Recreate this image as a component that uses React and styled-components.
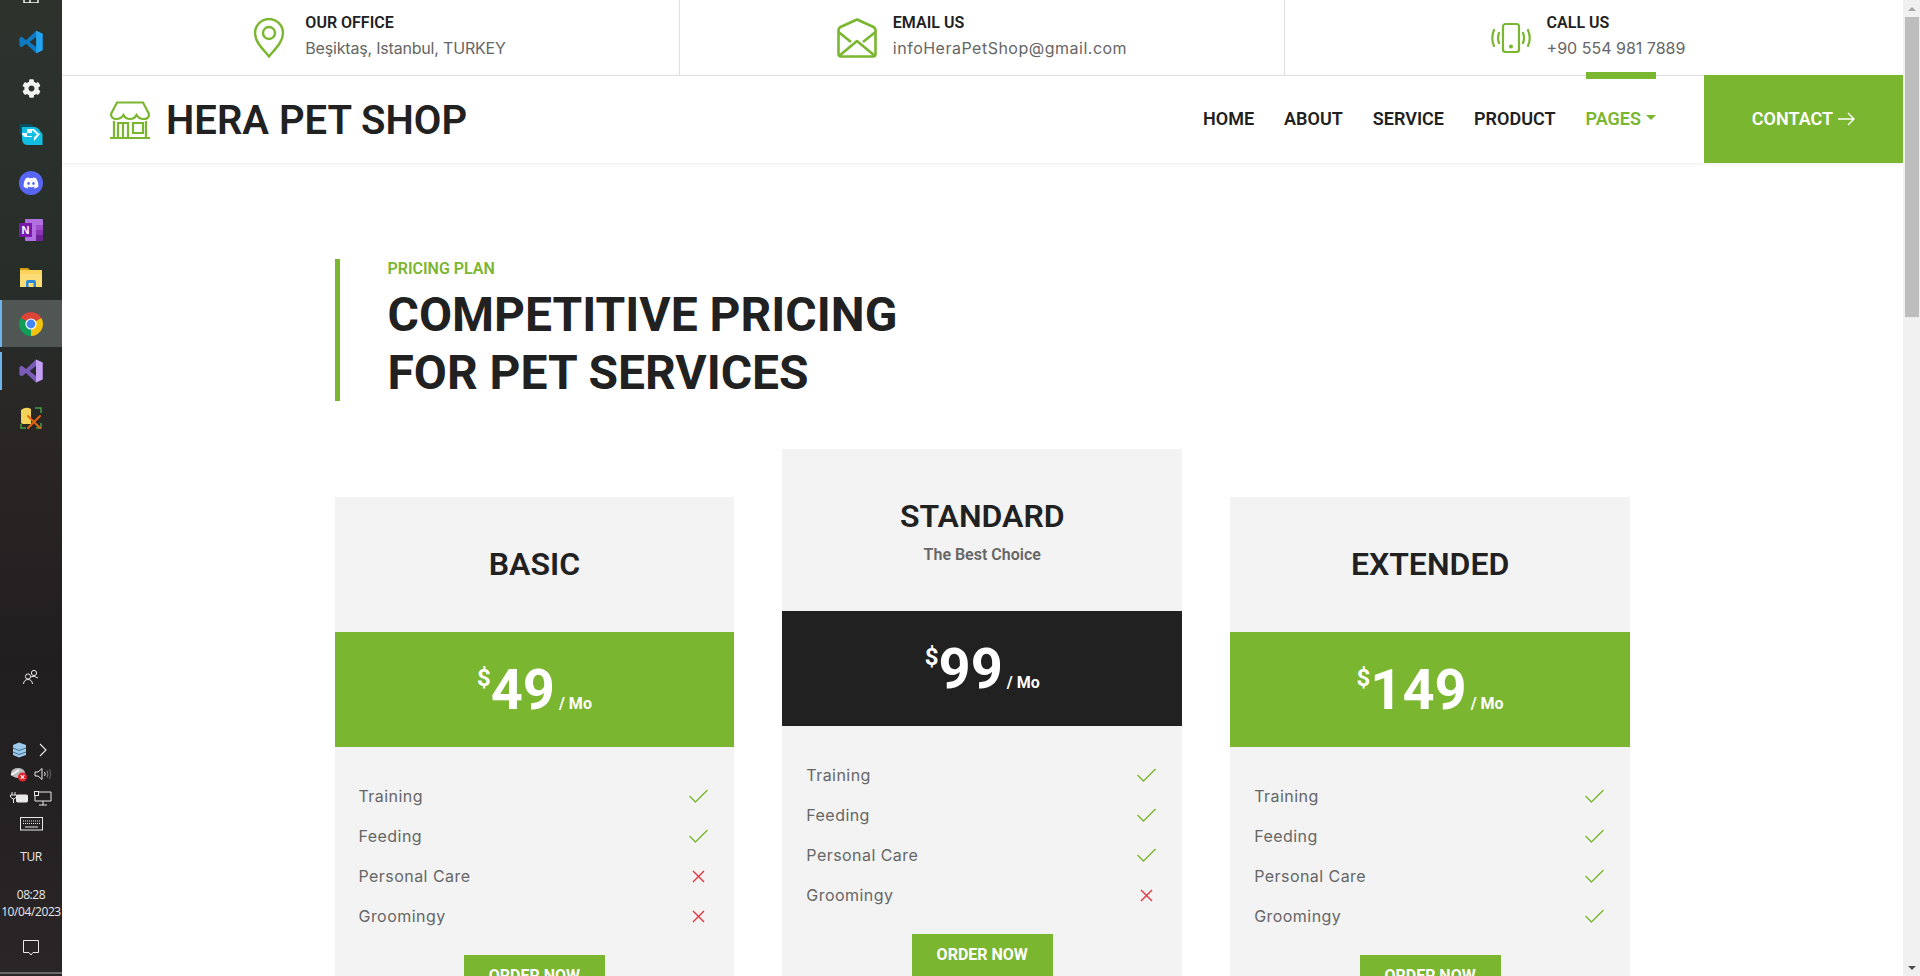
import React from "react";
import styled, { createGlobalStyle } from "styled-components";
import { FaDiscord, FaCog } from "react-icons/fa";

const GREEN = "#7ab62f";
const DARK = "#212121";
const GREY = "#666666";
const BODY_FONT = `"Inter", "Open Sans", sans-serif`;
const HEAD_FONT = `"Roboto", "Liberation Sans", sans-serif`;

const Global = createGlobalStyle`
  html, body { margin: 0; padding: 0; height: 976px; overflow: hidden; background: #fff; }
  * { box-sizing: border-box; }
`;

const Screen = styled.div`
  display: flex;
  width: 1920px;
  height: 976px;
  overflow: hidden;
  font-family: ${BODY_FONT};
`;

/* ---------- Windows taskbar ---------- */
const Taskbar = styled.aside`
  width: 62px;
  flex: none;
  height: 976px;
  display: flex;
  flex-direction: column;
  align-items: stretch;
  background: linear-gradient(180deg, #2d322d 0%, #272e2a 28%, #2a2324 50%, #201e1f 68%, #2a2526 100%);
  color: #fff;
`;
const TopFragment = styled.div`
  height: 18px;
  display: flex;
  justify-content: center;
  align-items: flex-start;
`;
const TaskSlot = styled.div`
  height: 47px;
  display: flex;
  align-items: center;
  justify-content: center;
  position: relative;
  background: ${(p) => (p.$active ? "#505653" : "transparent")};
`;
const RunBar = styled.span`
  position: absolute;
  left: 0;
  top: ${(p) => (p.$active ? "0" : "5px")};
  bottom: ${(p) => (p.$active ? "0" : "4px")};
  width: 2px;
  background: #6cb4ea;
`;
const People = styled.div`
  display: flex;
  justify-content: center;
  margin-top: 228px;
  height: 24px;
`;
const TrayGrid = styled.div`
  display: grid;
  grid-template-columns: 24px 24px;
  grid-auto-rows: 24px;
  justify-content: center;
  justify-items: center;
  align-items: center;
  margin-top: 45px;
`;
const KeyboardRow = styled.div`
  display: flex;
  justify-content: center;
  margin-top: 7px;
  height: 20px;
`;
const TrayText = styled.div`
  font-family: "Open Sans", "Liberation Sans", sans-serif;
  font-size: 12px;
  line-height: 17px;
  text-align: center;
  color: #e8e8e8;
  letter-spacing: -0.4px;
  white-space: nowrap;
  margin-top: ${(p) => p.$top || 0}px;
`;
const NotifyRow = styled.div`
  display: flex;
  justify-content: center;
  margin-top: 20px;
  height: 20px;
`;
const TaskEdge = styled.div`
  margin-top: auto;
  height: 2px;
  background: #6a6a6a;
  margin-bottom: 2px;
`;

/* ---------- Page ---------- */
const Main = styled.main`
  width: 1841px;
  flex: none;
  height: 976px;
  overflow: hidden;
`;
const InfoBar = styled.div`
  height: 75px;
  display: grid;
  grid-template-columns: 618px 605px 618px;
`;
const InfoCell = styled.div`
  display: flex;
  align-items: center;
  justify-content: center;
  gap: ${(p) => p.$gap}px;
  padding-left: ${(p) => p.$pl || 0}px;
  padding-right: ${(p) => p.$pr || 0}px;
  border-right: ${(p) => (p.$last ? "none" : "1px solid #e0e0e0")};
`;
const InfoText = styled.div`
  display: flex;
  flex-direction: column;
  margin-top: -3px;
`;
const InfoTitle = styled.div`
  font-family: ${HEAD_FONT};
  font-weight: 600;
  font-size: 16px;
  line-height: 22px;
  color: ${DARK};
  text-transform: uppercase;
`;
const InfoValue = styled.div`
  font-size: 16px;
  line-height: 24px;
  margin-top: 2px;
  color: ${GREY};
  letter-spacing: ${(p) => p.$ls || 0}px;
  white-space: nowrap;
`;
const NavBar = styled.nav`
  height: 88px;
  display: flex;
  align-items: stretch;
  justify-content: space-between;
  border-top: 1px solid #e0e0e0;
  box-shadow: 0 1px 4px rgba(0, 0, 0, 0.08);
  position: relative;
  padding-left: 48px;
`;
const Brand = styled.div`
  display: flex;
  align-items: center;
  gap: 16px;
`;
const BrandName = styled.h1`
  margin: 2px 0 0;
  font-family: ${HEAD_FONT};
  font-weight: 600;
  font-size: 40px;
  line-height: 48px;
  color: ${DARK};
  white-space: nowrap;
`;
const NavRight = styled.div`
  display: flex;
  align-items: stretch;
`;
const NavLinks = styled.ul`
  display: flex;
  align-items: center;
  gap: 30px;
  margin: 0 48px 0 0;
  padding: 0;
  list-style: none;
`;
const NavLink = styled.li`
  position: relative;
  display: flex;
  align-items: center;
  gap: 5px;
  height: 100%;
  padding-bottom: 2px;
  font-family: ${HEAD_FONT};
  font-weight: 600;
  font-size: 18px;
  color: ${(p) => (p.$active ? GREEN : DARK)};
  text-transform: uppercase;
  &::before {
    content: ${(p) => (p.$active ? '""' : "none")};
    position: absolute;
    left: 0;
    right: 0;
    top: -4px;
    height: 7px;
    background: ${GREEN};
  }
`;
const Caret = styled.span`
  width: 0;
  height: 0;
  border-left: 5px solid transparent;
  border-right: 5px solid transparent;
  border-top: 5px solid ${GREEN};
  margin-top: -2px;
`;
const ContactButton = styled.div`
  width: 199px;
  margin-top: -1px;
  padding-bottom: 1px;
  background: ${GREEN};
  color: #fff;
  display: flex;
  align-items: center;
  justify-content: center;
  gap: 5px;
  font-family: ${HEAD_FONT};
  font-weight: 600;
  font-size: 18px;
  text-transform: uppercase;
`;

const Section = styled.section`
  width: 1296px;
  margin: 0 auto;
  padding-top: 96px;
`;
const TitleBlock = styled.div`
  height: 142px;
  border-left: 5px solid ${GREEN};
  padding-left: 48px;
`;
const Eyebrow = styled.div`
  font-family: ${HEAD_FONT};
  font-weight: 600;
  font-size: 16px;
  line-height: 19px;
  color: ${GREEN};
  text-transform: uppercase;
`;
const Heading = styled.h2`
  margin: 8px 0 0;
  font-family: ${HEAD_FONT};
  font-weight: 700;
  font-size: 48px;
  line-height: 58px;
  color: ${DARK};
  text-transform: uppercase;
`;
const Plans = styled.div`
  display: grid;
  width: 1295.5px;
  grid-template-columns: repeat(3, 1fr);
  gap: 48px;
  margin-top: 48px;
  align-items: start;
`;
const Plan = styled.article`
  margin-top: ${(p) => (p.$featured ? 0 : 48)}px;
  background: #f3f3f3;
  text-align: center;
`;
const PlanHead = styled.div`
  height: ${(p) => (p.$featured ? 162 : 135)}px;
  padding-bottom: ${(p) => (p.$featured ? 0 : 2)}px;
  display: flex;
  flex-direction: column;
  justify-content: center;
  align-items: center;
`;
const PlanName = styled.h3`
  margin: 0;
  font-family: ${HEAD_FONT};
  font-weight: 600;
  font-size: 32px;
  line-height: 38px;
  color: ${DARK};
`;
const PlanNote = styled.div`
  font-family: ${HEAD_FONT};
  font-weight: 600;
  font-size: 16px;
  line-height: 19px;
  margin-top: 10px;
  color: ${GREY};
`;
const PriceBand = styled.div`
  height: 115px;
  padding-top: 14px;
  background: ${(p) => (p.$featured ? DARK : GREEN)};
  color: #fff;
  display: flex;
  align-items: center;
  justify-content: center;
  font-family: ${HEAD_FONT};
`;
const Price = styled.div`
  display: flex;
  align-items: baseline;
  font-weight: 700;
  font-size: 56px;
  line-height: 67px;
`;
const Currency = styled.span`
  font-size: 24px;
  font-weight: 700;
  line-height: 24px;
  align-self: flex-start;
  margin-top: 9px;
`;
const Per = styled.span`
  font-size: 16px;
  font-weight: 700;
  margin-left: 4px;
`;
const Features = styled.ul`
  list-style: none;
  margin: 0;
  padding: 29px 26px 19px 24px;
`;
const Feature = styled.li`
  height: 40px;
  display: flex;
  align-items: center;
  justify-content: space-between;
  font-size: 16px;
  color: ${GREY};
  letter-spacing: 0.45px;
`;
const OrderButton = styled.div`
  display: inline-flex;
  align-items: center;
  justify-content: center;
  width: 141px;
  height: 48px;
  padding-bottom: 8px;
  background: ${GREEN};
  color: #fff;
  font-family: ${HEAD_FONT};
  font-weight: 700;
  font-size: 16px;
  text-transform: uppercase;
`;

const ScrollTrack = styled.div`
  width: 17px;
  flex: none;
  height: 976px;
  background: #f0f0f0;
  display: flex;
  flex-direction: column;
`;
const ScrollUp = styled.div`
  height: 17px;
  display: flex;
  align-items: center;
  justify-content: center;
  &::before {
    content: "";
    border-left: 4px solid transparent;
    border-right: 4px solid transparent;
    border-bottom: 4px solid #a3a3a3;
  }
`;
const ScrollDown = styled.div`
  height: 17px;
  margin-top: auto;
  display: flex;
  align-items: center;
  justify-content: center;
  &::before {
    content: "";
    border-left: 4px solid transparent;
    border-right: 4px solid transparent;
    border-top: 4px solid #505050;
  }
`;
const ScrollThumb = styled.div`
  height: 300px;
  margin: 0 1px 0 2px;
  background: #bdbdbd;
`;

/* ---------- Icons ---------- */
const IconVSCode = () => (
  <svg width="24" height="24" viewBox="0 0 24 24">
    <path d="M17.2 0.8 L23.6 3.8 V20.2 L17.2 23.2 L7 13.8 L2.6 17.2 L0.4 16 V8 L2.6 6.8 L7 10.2 Z M17.4 6.8 L10.6 12 L17.4 17.2 Z" fill="#0f7ac4" fillRule="evenodd" />
    <path d="M17.2 0.8 L23.6 3.8 V20.2 L17.2 23.2 Z" fill="#22a5ee" />
  </svg>
);
const IconRemote = () => (
  <svg width="24" height="24" viewBox="0 0 24 24">
    <path d="M0.5 0 H12 L15 3 H7 Q3 3 3 7 V12 L0.5 9 Z" fill="#0b4f63" />
    <path d="M3 3 H15 Q19 3 21 7 L23.5 10 V21 H8 Q3 21 3 14 Z" fill="#12bfe0" />
    <path d="M3 9 H8 V5 L15 5 L19 9 L21 10 L15 17 V13 H7 Q4 13 3 10 Z" fill="#fff" opacity="0.95" />
    <path d="M8 9 H13 V6 L18 10.5 L13 15 V12 H8 Z" fill="#12bfe0" />
  </svg>
);
const IconDiscordBadge = styled.div`
  width: 24px;
  height: 24px;
  border-radius: 50%;
  background: #5865f2;
  color: #fff;
  display: flex;
  align-items: center;
  justify-content: center;
`;
const IconOneNote = () => (
  <svg width="24" height="24" viewBox="0 0 24 24">
    <rect x="6" y="1" width="18" height="22" rx="1" fill="#b16fe0" />
    <rect x="17" y="7" width="7" height="5" fill="#9c4fc9" />
    <rect x="17" y="12" width="7" height="5" fill="#8a36b5" />
    <rect x="17" y="17" width="7" height="6" fill="#6f2196" />
    <rect x="0" y="5" width="13" height="14" fill="#7719aa" />
    <text x="6.5" y="16" textAnchor="middle" fontFamily="Liberation Sans, sans-serif" fontWeight="700" fontSize="11" fill="#fff">N</text>
  </svg>
);
const IconFolder = () => (
  <svg width="24" height="24" viewBox="0 0 24 24">
    <path d="M1 3 H9 L11 5 V8 H1 Z" fill="#d49b11" />
    <rect x="1" y="5" width="22" height="17" fill="#fbd35c" />
    <rect x="1" y="9" width="22" height="13" fill="#fcdc74" />
    <path d="M7 22 V17 Q7 15 9 15 H15 Q17 15 17 17 V22 H14.5 V18 H9.5 V22 Z" fill="#2b88d8" />
  </svg>
);
const IconChrome = () => (
  <svg width="24" height="24" viewBox="0 0 24 24">
    <path d="M12 12 L1.61 6 A12 12 0 0 1 22.39 6 Z" fill="#db4437" />
    <path d="M12 12 L22.39 6 A12 12 0 0 1 12 24 Z" fill="#f4c20d" />
    <path d="M12 12 L12 24 A12 12 0 0 1 1.61 6 Z" fill="#0f9d58" />
    <circle cx="12" cy="12" r="5.6" fill="#fff" />
    <circle cx="12" cy="12" r="4.4" fill="#4285f4" />
  </svg>
);
const IconVS = () => (
  <svg width="24" height="24" viewBox="0 0 24 24">
    <path d="M17 0.5 L23.6 3.5 V20.5 L17 23.5 L7 14 L3 17.2 L0.4 16 V8 L3 6.8 L7 10 Z M17 7 L10.6 12 L17 17 Z" fill="#7a5bb8" fillRule="evenodd" />
    <path d="M17 0.5 L23.6 3.5 V20.5 L17 23.5 Z" fill="#c4a1f0" />
  </svg>
);
const IconDbTools = () => (
  <svg width="24" height="24" viewBox="0 0 24 24" fill="none">
    <path d="M2 4 Q7 0 12 3 V18 H4 Q2 18 2 16 Z" fill="#f2d35a" />
    <path d="M16 2 H22 V7 M22 17 V22 H17 M2 18 V22 H7" stroke="#3f9b45" strokeWidth="1.6" />
    <path d="M9 10 L21 22 M21 10 L9 22" stroke="#e06510" strokeWidth="2" strokeLinecap="round" />
  </svg>
);
const TrayIcon = ({ children, w = 20, h = 16 }) => (
  <svg width={w} height={h} viewBox={`0 0 ${w} ${h}`} fill="none" stroke="#e9e9e9" strokeWidth="1">
    {children}
  </svg>
);

const IconPin = () => (
  <svg width="32" height="40" viewBox="0 0 32 40" fill="none" stroke={GREEN} strokeWidth="2.4">
    <path d="M16 38.5 C10 31 2 24 2 15 A14 14 0 0 1 30 15 C30 24 22 31 16 38.5 Z" />
    <circle cx="16" cy="15" r="6" />
  </svg>
);
const IconMail = () => (
  <svg width="40" height="40" viewBox="0 0 40 40" fill="none" stroke={GREEN} strokeWidth="2.6" strokeLinejoin="round">
    <path d="M1.5 12 Q1.5 10 3.5 9 L20 1.5 L36.5 9 Q38.5 10 38.5 12 V36 Q38.5 38.5 36 38.5 H4 Q1.5 38.5 1.5 36 Z" />
    <path d="M1.5 14 L14 24 M38.5 14 L26 24 M2 38 L20 23 L38 38" />
  </svg>
);
const IconPhone = () => (
  <svg width="40" height="32" viewBox="0 0 40 32" fill="none" stroke={GREEN} strokeWidth="2.2" strokeLinecap="round">
    <rect x="12" y="2" width="16" height="28" rx="2.5" />
    <circle cx="20" cy="24.5" r="2" fill={GREEN} stroke="none" />
    <path d="M3 8 Q-0.5 16 3 24 M8 11 Q6 16 8 21 M37 8 Q40.5 16 37 24 M32 11 Q34 16 32 21" />
  </svg>
);
const IconStore = () => (
  <svg width="40" height="38" viewBox="0 0 40 38" fill="none" stroke={GREEN} strokeWidth="2.2">
    <path d="M7 1.5 H33 L39 13 Q39 18 33.5 18 Q29 18 26.5 14 Q24.5 18 20 18 Q15.5 18 13.5 14 Q11 18 6.5 18 Q1 18 1 13 Z" />
    <path d="M4 20 V36 M36 20 V36 M0 37 H40" />
    <path d="M8 36 V22 H18 V36 M13 22 V36 M23 22 H33 V32 H23 Z" />
  </svg>
);
const IconArrow = () => (
  <svg width="17" height="14" viewBox="0 0 17 14" fill="none" stroke="#fff" strokeWidth="1.4">
    <path d="M0 7 H16 M10 1 L16 7 L10 13" />
  </svg>
);
const IconCheck = () => (
  <svg width="19" height="14" viewBox="0 0 19 14" fill="none" stroke={GREEN} strokeWidth="1.4">
    <path d="M0.5 7 L6.5 13 L18.5 1" />
  </svg>
);
const IconCross = () => (
  <svg width="19" height="13" viewBox="0 0 19 13" fill="none" stroke="#e0343f" strokeWidth="1.4">
    <path d="M4 1 L15 12 M15 1 L4 12" />
  </svg>
);

const PLANS = [
  { name: "BASIC", price: "49", checks: [true, true, false, false] },
  { name: "STANDARD", note: "The Best Choice", price: "99", featured: true, checks: [true, true, true, false] },
  { name: "EXTENDED", price: "149", checks: [true, true, true, true] },
];
const FEATURES = ["Training", "Feeding", "Personal Care", "Groomingy"];
const NAV = ["Home", "About", "Service", "Product"];

export default function App() {
  return (
    <Screen>
      <Global />
      <Taskbar>
        <TopFragment>
          <svg width="16" height="3" viewBox="0 0 16 3"><path d="M1 0 V3 H15 V0 M7 0 V3" stroke="#fff" strokeWidth="1.4" fill="none" /></svg>
        </TopFragment>
        <TaskSlot><IconVSCode /></TaskSlot>
        <TaskSlot><FaCog size={19} color="#f2f2f2" /></TaskSlot>
        <TaskSlot><IconRemote /></TaskSlot>
        <TaskSlot><IconDiscordBadge><FaDiscord size={16} /></IconDiscordBadge></TaskSlot>
        <TaskSlot><IconOneNote /></TaskSlot>
        <TaskSlot><IconFolder /></TaskSlot>
        <TaskSlot $active><RunBar $active /><IconChrome /></TaskSlot>
        <TaskSlot><RunBar /><IconVS /></TaskSlot>
        <TaskSlot><IconDbTools /></TaskSlot>
        <People>
          <TrayIcon w={16} h={16}>
            <circle cx="11" cy="4" r="2.6" />
            <path d="M7 8 Q11 6 15 9" />
            <circle cx="5" cy="7.5" r="2.6" />
            <path d="M0.5 15 Q1 10.5 5 10.5 Q9 10.5 9.5 15" />
          </TrayIcon>
        </People>
        <TrayGrid>
          <svg width="15" height="16" viewBox="0 0 15 16">
            <path d="M1 3 L7 0.5 L14 3 V13 L7 15.5 L1 13 Z" fill="#9cc9e8" />
            <path d="M1 6 L7 8.5 L14 6 M1 10 L7 12.5 L14 10" stroke="#3d6f96" strokeWidth="1" fill="none" />
          </svg>
          <svg width="8" height="14" viewBox="0 0 8 14" fill="none" stroke="#eee" strokeWidth="1.1"><path d="M1 1 L7 7 L1 13" /></svg>
          <svg width="18" height="16" viewBox="0 0 18 16">
            <ellipse cx="8" cy="7" rx="7" ry="5" fill="#bdbdbd" />
            <path d="M1 9 L9 4" stroke="#fff" strokeWidth="1.5" />
            <circle cx="12.5" cy="11" r="4.5" fill="#e0232e" />
            <path d="M10.7 9.2 L14.3 12.8 M14.3 9.2 L10.7 12.8" stroke="#fff" strokeWidth="1.1" />
          </svg>
          <TrayIcon w={18} h={14}>
            <path d="M1 5 H4 L8 1.5 V12.5 L4 9 H1 Z" />
            <path d="M10.5 5 Q12 7 10.5 9" />
            <path d="M13 3.5 Q15 7 13 10.5" stroke="#888" />
            <path d="M15.5 2 Q18 7 15.5 12" stroke="#666" />
          </TrayIcon>
          <TrayIcon w={18} h={12}>
            <path d="M2 0 V3 M5 0 V3 M0.5 3 H6.5 V5 L4 7 H3 L0.5 5 Z M3.5 7 V11" />
            <rect x="6.5" y="3" width="11" height="7" rx="1" fill="#e9e9e9" />
          </TrayIcon>
          <TrayIcon w={18} h={15}>
            <path d="M4 1 H17 V10 H1" />
            <rect x="0.5" y="0.5" width="4" height="4" />
            <path d="M1 10 V5 M9 10 V14 M5 14 H13" />
          </TrayIcon>
        </TrayGrid>
        <KeyboardRow>
          <TrayIcon w={23} h={14}>
            <rect x="0.5" y="0.5" width="22" height="12.5" />
            <path d="M3 4 H20 M3 6.5 H20" strokeDasharray="1 1" />
            <path d="M5 10 H18" />
          </TrayIcon>
        </KeyboardRow>
        <TrayText $top={11}>TUR</TrayText>
        <TrayText $top={21}>08:28</TrayText>
        <TrayText>10/04/2023</TrayText>
        <NotifyRow>
          <TrayIcon w={16} h={16}>
            <path d="M0.5 0.5 H15.5 V12.5 H10 L8 15 L6 12.5 H0.5 Z" />
          </TrayIcon>
        </NotifyRow>
        <TaskEdge />
      </Taskbar>

      <Main>
        <InfoBar>
          <InfoCell $gap={20} $pl={18}>
            <IconPin />
            <InfoText>
              <InfoTitle>Our Office</InfoTitle>
              <InfoValue $ls={-0.19}>Beşiktaş, Istanbul, TURKEY</InfoValue>
            </InfoText>
          </InfoCell>
          <InfoCell $gap={16}>
            <IconMail />
            <InfoText>
              <InfoTitle>Email Us</InfoTitle>
              <InfoValue $ls={0.5}>infoHeraPetShop@gmail.com</InfoValue>
            </InfoText>
          </InfoCell>
          <InfoCell $gap={16} $pr={12} $last>
            <IconPhone />
            <InfoText>
              <InfoTitle>Call Us</InfoTitle>
              <InfoValue>+90 554 981 7889</InfoValue>
            </InfoText>
          </InfoCell>
        </InfoBar>
        <NavBar>
          <Brand>
            <IconStore />
            <BrandName>HERA PET SHOP</BrandName>
          </Brand>
          <NavRight>
            <NavLinks>
              {NAV.map((n) => <NavLink key={n}>{n}</NavLink>)}
              <NavLink $active>Pages<Caret /></NavLink>
            </NavLinks>
            <ContactButton>Contact<IconArrow /></ContactButton>
          </NavRight>
        </NavBar>
        <Section>
          <TitleBlock>
            <Eyebrow>Pricing Plan</Eyebrow>
            <Heading>Competitive Pricing<br />For Pet Services</Heading>
          </TitleBlock>
          <Plans>
            {PLANS.map((p) => (
              <Plan key={p.name} $featured={p.featured}>
                <PlanHead $featured={p.featured}>
                  <PlanName>{p.name}</PlanName>
                  {p.note && <PlanNote>{p.note}</PlanNote>}
                </PlanHead>
                <PriceBand $featured={p.featured}>
                  <Price>
                    <Currency>$</Currency>
                    {p.price}
                    <Per>/ Mo</Per>
                  </Price>
                </PriceBand>
                <Features>
                  {FEATURES.map((f, i) => (
                    <Feature key={f}>
                      {f}
                      {p.checks[i] ? <IconCheck /> : <IconCross />}
                    </Feature>
                  ))}
                </Features>
                <OrderButton>Order Now</OrderButton>
              </Plan>
            ))}
          </Plans>
        </Section>
      </Main>

      <ScrollTrack>
        <ScrollUp />
        <ScrollThumb />
        <ScrollDown />
      </ScrollTrack>
    </Screen>
  );
}
